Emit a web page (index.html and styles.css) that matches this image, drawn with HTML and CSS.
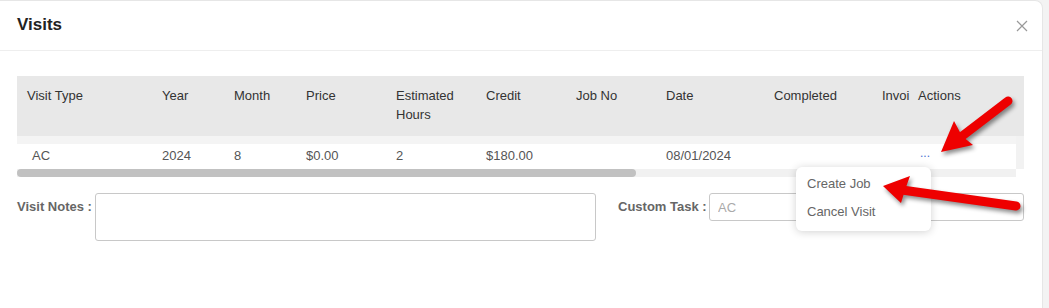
FILE: index.html
```html
<!DOCTYPE html>
<html lang="en">
<head>
  <meta charset="UTF-8">
  <title>Visits</title>
  <link rel="stylesheet" href="styles.css">
</head>
<body>

  <div class="modal">
    <div class="modal-header">
      <h2>Visits</h2>
      <svg class="close" width="12" height="12" viewBox="0 0 12 12">
        <path d="M1 1 L11 11 M11 1 L1 11" stroke="#999" stroke-width="1.2" fill="none"/>
      </svg>
    </div>

    <div class="modal-body">
      <div class="table-wrap">
        <div class="grid head">
          <div class="first">Visit Type</div>
          <div>Year</div>
          <div>Month</div>
          <div>Price</div>
          <div>Estimated Hours</div>
          <div>Credit</div>
          <div>Job No</div>
          <div>Date</div>
          <div>Completed</div>
          <div>Invoi</div>
          <div>Actions</div>
        </div>
        <div class="row-strip"></div>
        <div class="grid body-row">
          <div class="first">AC</div>
          <div>2024</div>
          <div>8</div>
          <div>$0.00</div>
          <div>2</div>
          <div>$180.00</div>
          <div></div>
          <div>08/01/2024</div>
          <div></div>
          <div></div>
          <div class="dots">...</div>
        </div>
      </div>
      <div class="scroll-track"><div class="scroll-thumb"></div></div>

      <div class="form-row">
        <label class="lbl notes-lbl">Visit Notes :</label>
        <textarea class="notes"></textarea>
        <label class="lbl task-lbl">Custom Task :</label>
        <input class="task" type="text" placeholder="AC">
      </div>
    </div>
  </div>

  <div class="menu">
    <div class="item">Create Job</div>
    <div class="item">Cancel Visit</div>
  </div>

  <!-- annotation arrows -->
  <svg class="arrows" width="1049" height="308" viewBox="0 0 1049 308">
    <g class="arrow">
      <line x1="1008" y1="101" x2="957" y2="140" stroke="#ee0000" stroke-width="9" stroke-linecap="round"/>
      <polygon points="941,152 954,121 962,136 973,145" fill="#ee0000"/>
    </g>
    <g class="arrow">
      <line x1="1016" y1="206" x2="902" y2="190" stroke="#ee0000" stroke-width="9" stroke-linecap="round"/>
      <polygon points="883,186 910,176 905,190 901,203" fill="#ee0000"/>
    </g>
  </svg>

</body>
</html>
```

FILE: styles.css
```css
body {
  margin: 0;
  background: #f3f3f3;
  font-family: "Liberation Sans", Arial, sans-serif;
  font-size: 13px;
  color: #333;
  width: 1049px;
  height: 308px;
  overflow: hidden;
}

.modal {
  width: 1043px;
  height: 320px;
  background: #fff;
  border: 1px solid #e6e6e6;
  border-left: none;
  border-radius: 0 8px 0 0;
  box-sizing: border-box;
}

.modal-header {
  height: 50px;
  padding: 0 14px 0 17px;
  border-bottom: 1px solid #eeeeee;
  display: flex;
  align-items: center;
  justify-content: space-between;
  box-sizing: border-box;
}

.modal-header h2 {
  margin: 0;
  font-size: 17px;
  font-weight: bold;
  color: #222;
  padding-bottom: 1px;
}

.close {
  margin-top: 1px;
}

.modal-body {
  padding: 25px 18px 0 17px;
}

.table-wrap {
  background: #f2f2f2;
  overflow: hidden;
}

.grid {
  display: grid;
  grid-template-columns: 145px 72px 72px 90px 90px 90px 90px 108px 108px 36px 1fr;
}

.head {
  background: #e8e8e8;
  height: 60px;
  padding-top: 10px;
  box-sizing: border-box;
  line-height: 19px;
  color: #333;
}

.head .first {
  padding-left: 10px;
}

.head div:nth-child(5) {
  padding-right: 30px;
}

.row-strip {
  height: 8px;
  width: 999px;
  background: #f4f4f4;
}

.body-row {
  width: 999px;
  height: 25px;
  padding-top: 2px;
  box-sizing: border-box;
  background: #fff;
  color: #555;
  line-height: 20px;
}

.body-row .first {
  padding-left: 15px;
}

.dots {
  color: #4a6fd0;
  padding-left: 2px;
  font-size: 12px;
  line-height: 14px;
}

.scroll-track {
  width: 999px;
  height: 8px;
  background: #f1f1f1;
}

.scroll-thumb {
  width: 619px;
  height: 8px;
  background: #c1c1c1;
  border-radius: 4px;
}

.form-row {
  display: flex;
  align-items: flex-start;
  margin-top: 16px;
}

.lbl {
  font-weight: bold;
  color: #666;
  line-height: 28px;
  box-sizing: border-box;
}

.notes-lbl {
  width: 78px;
}

.notes {
  width: 501px;
  height: 48px;
  border: 1px solid #c8c8c8;
  border-radius: 3px;
  box-sizing: border-box;
  resize: none;
  margin: 0;
}

.task-lbl {
  width: 113px;
  padding-left: 22px;
}

.task {
  flex: 1;
  height: 28px;
  border: 1px solid #c8c8c8;
  border-radius: 3px;
  box-sizing: border-box;
  margin: 0;
  padding: 0 8px;
  font-family: "Liberation Sans", Arial, sans-serif;
  font-size: 13px;
}

.task::placeholder {
  color: #aaa;
}

.menu {
  position: absolute;
  left: 796px;
  top: 167px;
  width: 135px;
  height: 64px;
  padding-top: 3px;
  box-sizing: border-box;
  background: #fff;
  border-radius: 6px;
  box-shadow: 0 1px 8px rgba(0, 0, 0, 0.18);
}

.item {
  padding-left: 11px;
  line-height: 28px;
  color: #666;
}

.arrows {
  position: absolute;
  left: 0;
  top: 0;
  pointer-events: none;
}

.arrow {
  filter: drop-shadow(2px 3px 2px rgba(0, 0, 0, 0.45));
}
```
